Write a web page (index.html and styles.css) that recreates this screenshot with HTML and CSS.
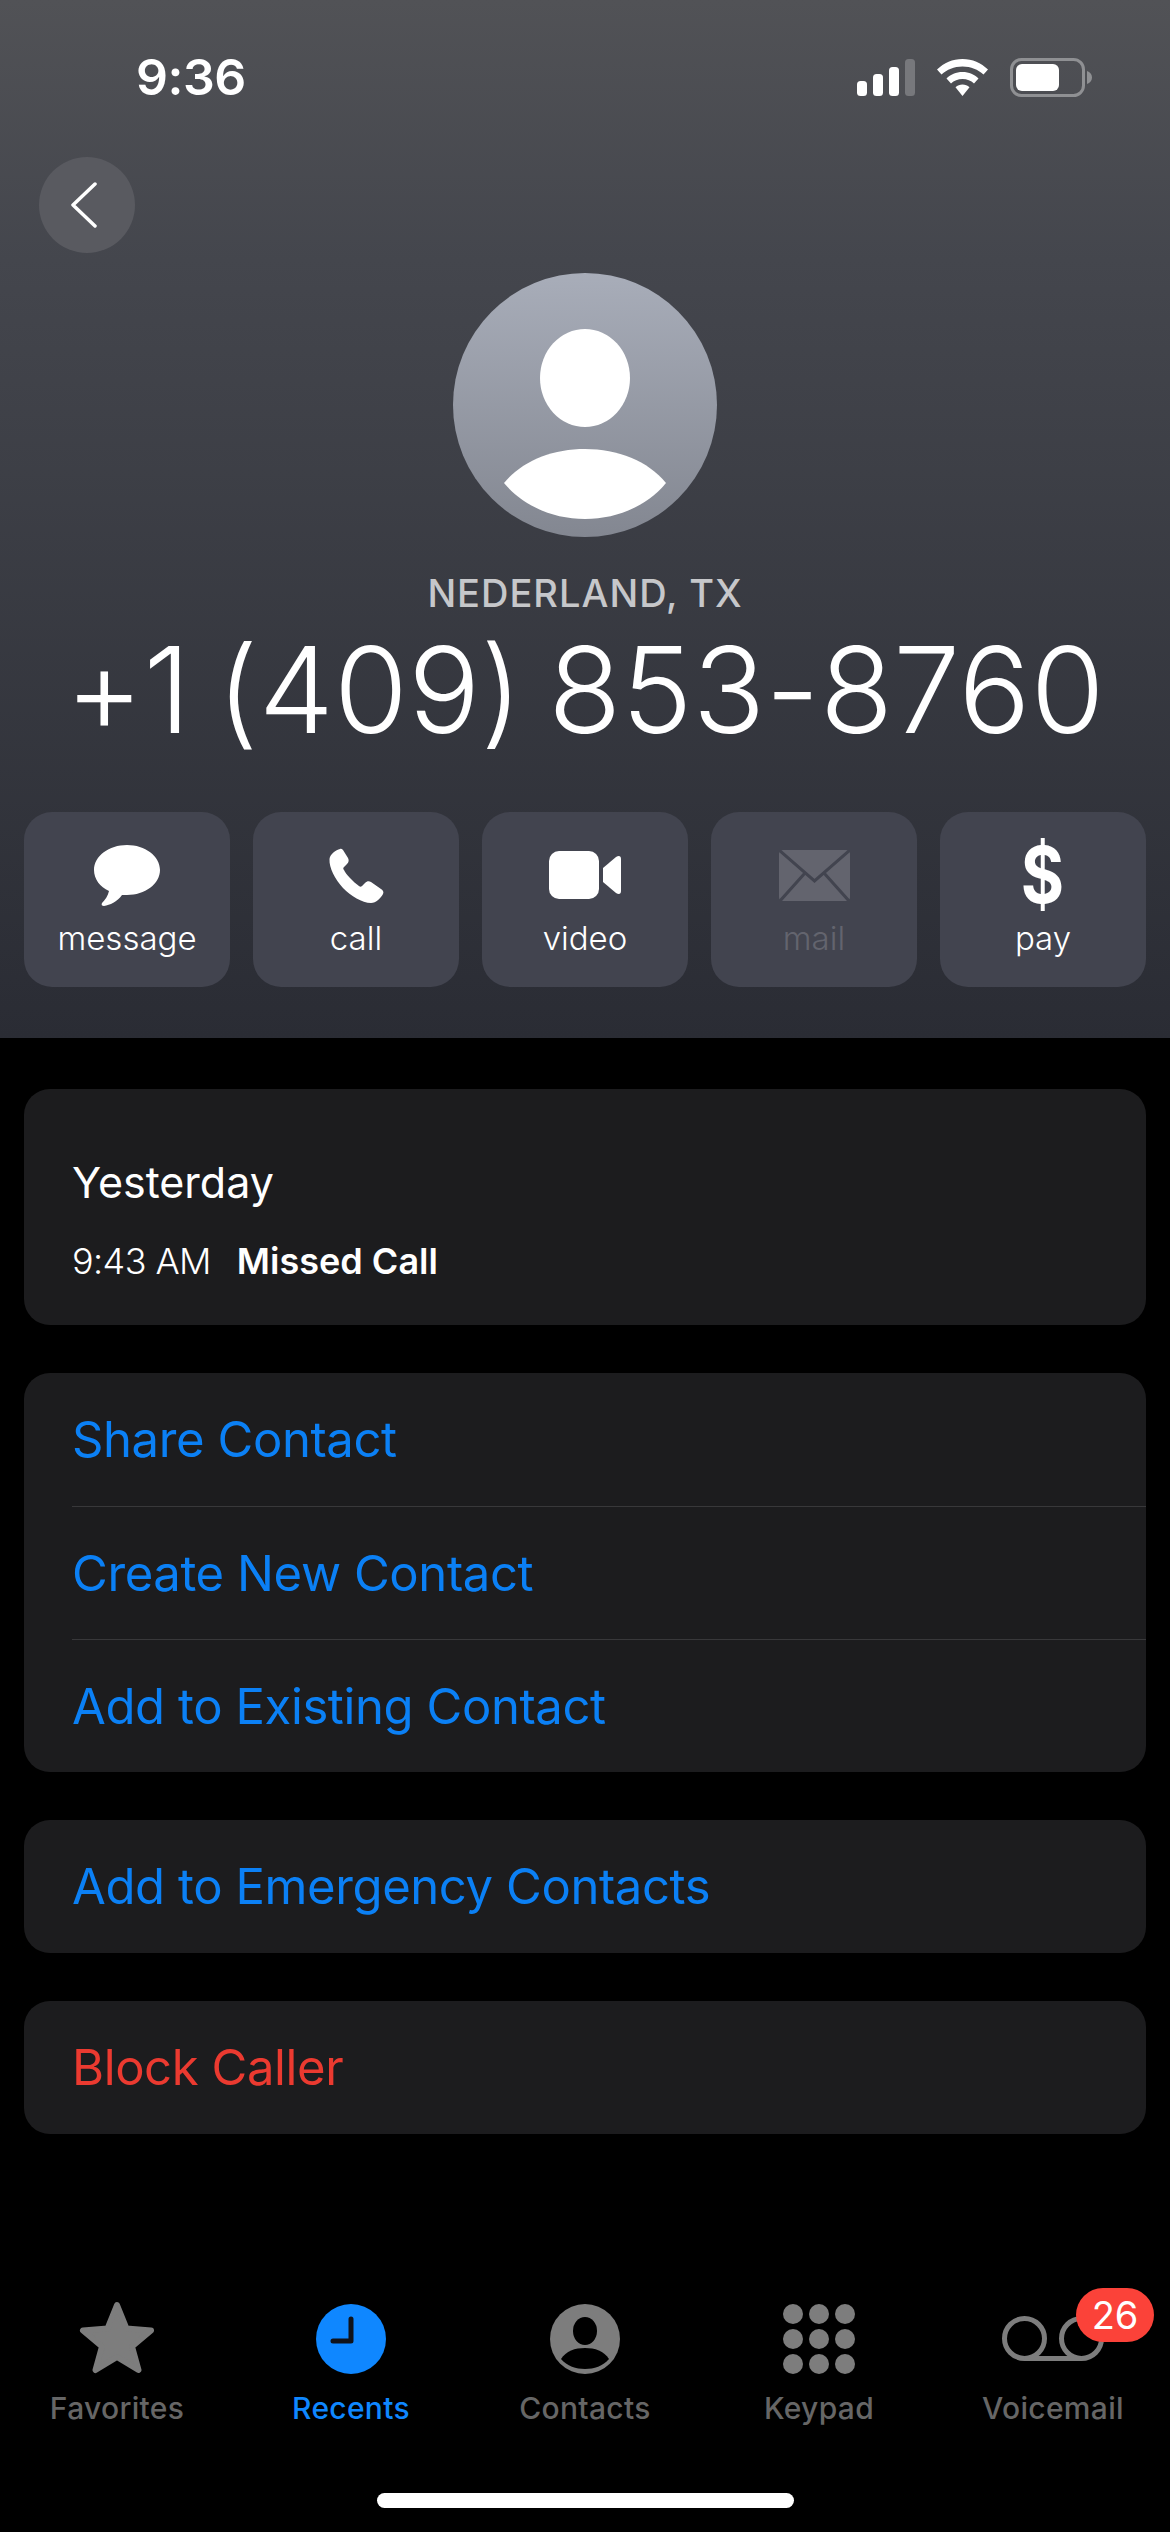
FILE: index.html
```html
<!DOCTYPE html>
<html lang="en">
<head>
    <meta charset="UTF-8">
    <meta name="viewport" content="width=device-width, initial-scale=1.0">
    <title>Recents</title>
    <link rel="stylesheet" href="styles.css">
</head>
<body>
    <div class="screen">
        <!-- Gradient header with the caller and actions -->
        <header class="header">
            <div class="status-bar">
                <span class="time">9:36</span>
                <div class="status-icons">
                    <svg class="signal" width="58" height="37" viewBox="0 0 58 37">
                        <rect x="0" y="22" width="10" height="15" rx="3.5" fill="#fff"/>
                        <rect x="16" y="15" width="10" height="22" rx="3.5" fill="#fff"/>
                        <rect x="32" y="8" width="10" height="29" rx="3.5" fill="#fff"/>
                        <rect x="48" y="0" width="10" height="37" rx="3.5" fill="#77787c"/>
                    </svg>
                    <svg class="wifi" width="51" height="37" viewBox="0 0 51 37">
                        <path d="M25.5 0C15.5 0 7 4 0 10.500L4.500 15.500C10 10.500 17 7.500 25.500 7.500C34 7.500 41 10.500 46.500 15.500L51 10.500C44 4 35.500 0 25.500 0Z" fill="#fff"/>
                        <path d="M25.500 13C19 13 13.500 15.500 9.500 19.500L14 24.500C17 21.700 21 20 25.500 20C30 20 34 21.700 37 24.500L41.500 19.500C37.500 15.500 32 13 25.500 13Z" fill="#fff"/>
                        <path d="M25.500 25.500C22.800 25.500 20.500 26.500 18.500 28.200L25.500 37L32.500 28.200C30.500 26.500 28.200 25.500 25.500 25.500Z" fill="#fff"/>
                    </svg>
                    <svg class="battery" width="82" height="39" viewBox="0 0 82 39">
                        <rect x="1.500" y="1.500" width="72" height="36" rx="10" fill="none" stroke="#8f9093" stroke-width="3"/>
                        <rect x="6" y="6" width="43" height="27" rx="6" fill="#fff"/>
                        <path d="M77 13C80 14 82 16.500 82 19.500C82 22.500 80 25 77 26Z" fill="#8f9093"/>
                    </svg>
                </div>
            </div>

            <div class="back-row">
                <button class="back-btn">
                    <svg class="back-icon" width="28" height="46" viewBox="0 0 28 46">
                        <path d="M25 2L3 23L25 44" fill="none" stroke="#fff" stroke-width="3.500" stroke-linecap="round" stroke-linejoin="round"/>
                    </svg>
                </button>
            </div>

            <div class="avatar">
                <div class="avatar-head"></div>
                <div class="avatar-body"></div>
            </div>

            <div class="location">NEDERLAND, TX</div>
            <div class="number">+1 (409) 853-8760</div>

            <div class="actions">
                <div class="action">
                    <div class="action-icon">
                        <svg width="66" height="61" viewBox="0 0 66 61">
                            <path d="M33 0C15 0 0 11 0 25C0 34 6 42 15 46C14 51 11 55 8 58C7 60 8 61 10 61C16 60 23 57 28 50C30 50 31 50 33 50C51 50 66 39 66 25C66 11 51 0 33 0Z" fill="#fff"/>
                        </svg>
                    </div>
                    <span>message</span>
                </div>
                <div class="action">
                    <div class="action-icon">
                        <svg width="55" height="55" viewBox="0 0 55 55">
                            <path d="M11 1C7 2 1 6 .5 11C0 20 6 31 14 40C22 48 33 55 42 55C47 55 52 50 54 46C55 44 54 42 52 41L42 34C40 33 38 33 36 35L33 38C32 39 31 39 30 38C27 36 24 33 21 30C18 27 16 24 15 22C14 21 14 20 15 19L18 16C20 14 20 12 19 10L14 2C13 1 12 .5 11 1Z" fill="#fff"/>
                        </svg>
                    </div>
                    <span>call</span>
                </div>
                <div class="action">
                    <div class="action-icon">
                        <svg width="72" height="48" viewBox="0 0 72 48">
                            <rect x="0" y="0" width="50" height="48" rx="10" fill="#fff"/>
                            <path d="M54 17L67 6C70 4 72 5 72 8V40C72 43 70 44 67 42L54 31Z" fill="#fff"/>
                        </svg>
                    </div>
                    <span>video</span>
                </div>
                <div class="action action-off">
                    <div class="action-icon">
                        <svg width="71" height="51" viewBox="0 0 71 51">
                            <rect x="0" y="0" width="71" height="51" rx="4" fill="#63646e"/>
                            <path d="M0 0L35.500 31L71 0M1 51L26 23M70 51L45 23" fill="none" stroke="#42444f" stroke-width="3"/>
                        </svg>
                    </div>
                    <span>mail</span>
                </div>
                <div class="action">
                    <div class="action-icon"><span class="dollar">$</span></div>
                    <span>pay</span>
                </div>
            </div>
        </header>

        <main class="content">
            <section class="card call-info">
                <div class="call-day">Yesterday</div>
                <div class="call-line">
                    <span class="call-time">9:43 AM</span>
                    <span class="call-type">Missed Call</span>
                </div>
            </section>

            <section class="card">
                <div class="row"><span class="link">Share Contact</span></div>
                <div class="row"><span class="link">Create New Contact</span></div>
                <div class="row"><span class="link">Add to Existing Contact</span></div>
            </section>

            <section class="card">
                <div class="row"><span class="link">Add to Emergency Contacts</span></div>
            </section>

            <section class="card">
                <div class="row"><span class="link danger">Block Caller</span></div>
            </section>
        </main>

        <!-- Bottom tab bar -->
        <nav class="tabs">
            <div class="tab">
                <div class="tab-icon">
                    <svg width="76" height="73" viewBox="0 0 76 73">
                        <path d="M38 4L47.500 27.500L72 29.500L53 45.500L59.500 69L38 56L16.500 69L23 45.500L4 29.500L28.500 27.500Z" fill="#7d7d7d" stroke="#7d7d7d" stroke-width="6" stroke-linejoin="round"/>
                    </svg>
                </div>
                <span>Favorites</span>
            </div>
            <div class="tab tab-active">
                <div class="tab-icon">
                    <svg width="70" height="70" viewBox="0 0 70 70">
                        <circle cx="35" cy="35" r="35" fill="#0f87ff"/>
                        <path d="M35 15V37H17" fill="none" stroke="#10131a" stroke-width="5" stroke-linecap="round" stroke-linejoin="round"/>
                    </svg>
                </div>
                <span>Recents</span>
            </div>
            <div class="tab">
                <div class="tab-icon">
                    <svg width="70" height="70" viewBox="0 0 70 70">
                        <circle cx="35" cy="35" r="35" fill="#7d7d7d"/>
                        <ellipse cx="35" cy="27" rx="12" ry="14" fill="#000"/>
                        <path d="M11 55C16 47 25 44 35 44C45 44 54 47 59 55C53 62 44 65 35 65C26 65 17 62 11 55Z" fill="#000"/>
                    </svg>
                </div>
                <span>Contacts</span>
            </div>
            <div class="tab">
                <div class="tab-icon">
                    <svg width="72" height="70" viewBox="0 0 72 70">
                        <g fill="#7d7d7d">
                            <circle cx="10" cy="10" r="10"/><circle cx="36" cy="10" r="10"/><circle cx="62" cy="10" r="10"/>
                            <circle cx="10" cy="35" r="10"/><circle cx="36" cy="35" r="10"/><circle cx="62" cy="35" r="10"/>
                            <circle cx="10" cy="60" r="10"/><circle cx="36" cy="60" r="10"/><circle cx="62" cy="60" r="10"/>
                        </g>
                    </svg>
                </div>
                <span>Keypad</span>
            </div>
            <div class="tab">
                <div class="tab-icon">
                    <svg class="voicemail" width="102" height="46" viewBox="0 0 102 46">
                        <circle cx="22.500" cy="22.500" r="20" fill="none" stroke="#7d7d7d" stroke-width="5"/>
                        <circle cx="79.500" cy="22.500" r="20" fill="none" stroke="#7d7d7d" stroke-width="5"/>
                        <path d="M22.500 42.500H79.500" stroke="#7d7d7d" stroke-width="5"/>
                    </svg>
                    <span class="badge">26</span>
                </div>
                <span>Voicemail</span>
            </div>
        </nav>

        <div class="home-bar"></div>
    </div>
</body>
</html>
```

FILE: styles.css
```css
* {
    box-sizing: border-box;
}

body {
    margin: 0;
    background-color: #000;
    font-family: Inter, "Noto Sans", sans-serif;
    color: #fff;
}

.screen {
    width: 1170px;
    height: 2532px;
    display: flex;
    flex-direction: column;
    overflow: hidden;
}

/* Header */
.header {
    height: 1038px;
    background: linear-gradient(180deg, #515256 0%, #44464d 25%, #2a2c34 100%);
    display: flex;
    flex-direction: column;
    align-items: center;
}

.status-bar {
    width: 100%;
    height: 157px;
    padding: 50px 78px 0 136px;
    display: flex;
    justify-content: space-between;
    align-items: flex-start;
}

.time {
    font-size: 50px;
    line-height: 54px;
    font-weight: 600;
    letter-spacing: -0.5px;
}

.status-icons {
    display: flex;
    align-items: center;
    gap: 22px;
    margin-top: 8px;
}

.back-row {
    width: 100%;
    height: 116px;
    padding-left: 39px;
}

.back-btn {
    width: 96px;
    height: 96px;
    padding: 0;
    border: 0;
    border-radius: 50%;
    background-color: #595a60;
    display: flex;
    justify-content: center;
    align-items: center;
}

.back-icon {
    margin-right: 6px;
}

.avatar {
    position: relative;
    width: 264px;
    height: 264px;
    border-radius: 50%;
    overflow: hidden;
    background: linear-gradient(180deg, #a8adb9 0%, #838791 100%);
    flex-shrink: 0;
}

.avatar-head {
    width: 90px;
    height: 98px;
    margin: 56px auto 0;
    border-radius: 50%;
    background-color: #fff;
}

.avatar-body {
    width: 162px;
    height: 70px;
    margin: 22px auto 0;
    background-color: #fff;
    clip-path: path("M0 34C18 12 48 0 81 0C114 0 144 12 162 34C144 56 114 70 81 70C48 70 18 56 0 34Z");
}

.location {
    margin-top: 33px;
    font-size: 38px;
    line-height: 46px;
    font-weight: 500;
    letter-spacing: 1px;
    color: #c6c7ca;
}

.number {
    margin-top: 6px;
    font-size: 119.5px;
    line-height: 136px;
    font-weight: 300;
    letter-spacing: 0.3px;
    word-spacing: -8px;
    white-space: nowrap;
}

/* Action buttons */
.actions {
    width: 100%;
    padding: 0 24px;
    margin-top: 54px;
    display: grid;
    grid-template-columns: repeat(5, 1fr);
    gap: 23px;
}

.action {
    height: 175px;
    border-radius: 28px;
    background-color: #42444f;
    display: flex;
    flex-direction: column;
    align-items: center;
    padding-top: 28px;
    font-size: 33px;
    line-height: 40px;
    font-weight: 350;
}

.action-off {
    color: #63646e;
}

.action-icon {
    height: 70px;
    margin-bottom: 8px;
    display: flex;
    justify-content: center;
    align-items: center;
}

.dollar {
    font-size: 78px;
    line-height: 70px;
    font-weight: 700;
    transform: scaleX(0.85);
}

/* Cards */
.content {
    padding: 51px 24px 0;
    display: flex;
    flex-direction: column;
    gap: 48px;
}

.card {
    border-radius: 26px;
    background-color: #1c1c1e;
    overflow: hidden;
}

.call-info {
    height: 236px;
    padding: 67px 48px 0;
}

.call-day {
    font-size: 43px;
    line-height: 52px;
}

.call-line {
    margin-top: 32px;
    display: flex;
    gap: 26px;
    align-items: baseline;
    font-size: 36px;
    line-height: 42px;
}

.call-time {
    font-weight: 300;
    letter-spacing: -0.6px;
}

.call-type {
    font-weight: 600;
}

.row {
    height: 133px;
    margin-left: 48px;
    display: flex;
    align-items: center;
}

.row + .row {
    border-top: 1px solid #38383a;
}

.link {
    font-size: 49px;
    letter-spacing: -0.4px;
    color: #0b80f5;
}

.danger {
    color: #eb3a30;
}

/* Tab bar */
.tabs {
    margin-top: auto;
    display: grid;
    grid-template-columns: repeat(5, 1fr);
}

.tab {
    display: flex;
    flex-direction: column;
    align-items: center;
    font-size: 30px;
    line-height: 36px;
    font-weight: 500;
    letter-spacing: 0.3px;
    color: #666;
}

.tab-active {
    color: #0f87ff;
}

.tab-icon {
    position: relative;
    height: 74px;
    margin-bottom: 16px;
    display: flex;
    justify-content: center;
    align-items: flex-end;
}

.voicemail {
    margin-bottom: 12px;
}

.badge {
    position: absolute;
    top: -12px;
    left: 74px;
    width: 78px;
    height: 54px;
    border-radius: 27px;
    background-color: #fb4239;
    color: #fff;
    font-size: 38px;
    line-height: 54px;
    font-weight: 400;
    letter-spacing: 0;
    text-align: center;
}

.home-bar {
    width: 417px;
    height: 15px;
    margin: 67px auto 24px;
    border-radius: 8px;
    background-color: #fff;
    flex-shrink: 0;
}
```
